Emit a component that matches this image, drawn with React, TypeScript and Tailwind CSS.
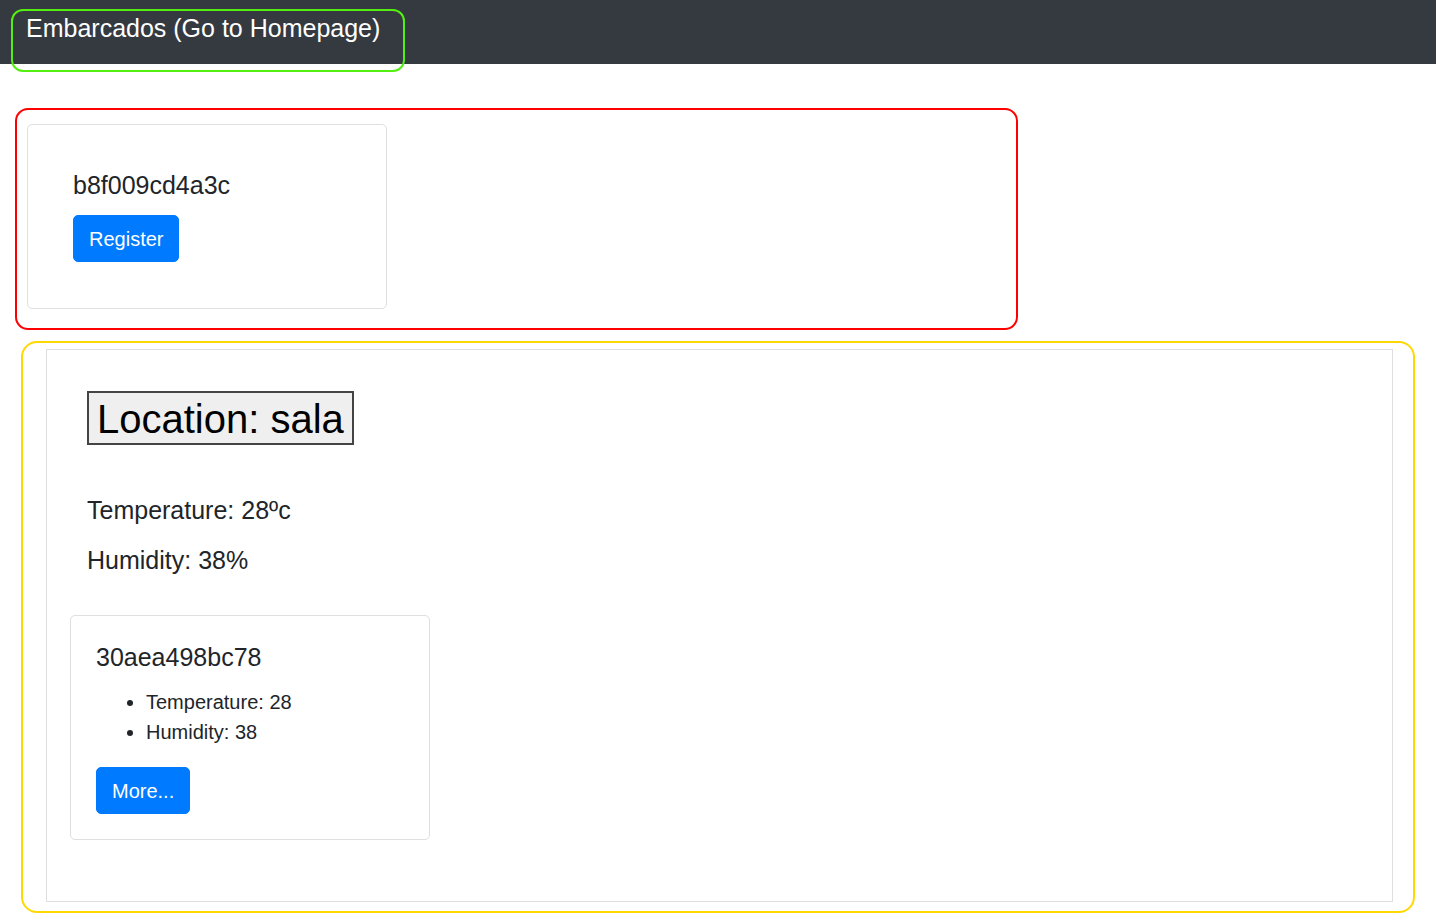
const font = "font-['Liberation_Sans',Arial,sans-serif]";

function Marker({ className }: { className: string }) {
  return <div className={`pointer-events-none absolute border-2 ${className}`} />;
}

export default function App() {
  return (
    <div className={`relative min-h-[923px] bg-white text-[#212529] ${font}`}>
      <nav className="h-[64px] bg-[#343a40] pl-[26px] pt-[13px]">
        <a className="text-[25px] leading-[30px] text-white">Embarcados (Go to Homepage)</a>
      </nav>

      <div className="ml-[27px] mt-[60px] w-[360px] rounded-[5px] border border-[#dfdfdf] px-[45px] pb-[46px] pt-[45px]">
        <h5 className="mb-[15px] text-[25px] leading-[30px]">b8f009cd4a3c</h5>
        <button className="rounded-[5px] border border-[#007bff] bg-[#007bff] px-[15px] py-[7.5px] text-[20px] leading-[30px] text-white">
          Register
        </button>
      </div>

      <div className="ml-[46px] mr-[43px] mt-[40px] border border-[#dfdfdf] px-[40px] pb-[61px] pt-[41px]">
        <button className="border-2 border-[#444] bg-[#efefef] px-[8px] pb-[2px] pt-[4px] text-[40px] leading-[44px] text-black">
          Location: sala
        </button>
        <p className="mt-[50px] text-[25px] leading-[30px]">Temperature: 28ºc</p>
        <p className="mt-[20px] text-[25px] leading-[30px]">Humidity: 38%</p>

        <div className="-ml-[17px] mt-[40px] w-[360px] rounded-[5px] border border-[#dfdfdf] px-[25px] pb-[25px] pt-[26px]">
          <h5 className="mb-[15px] text-[25px] leading-[30px]">30aea498bc78</h5>
          <ul className="mb-[20px] list-disc pl-[50px] text-[20px] leading-[30px]">
            <li>Temperature: 28</li>
            <li>Humidity: 38</li>
          </ul>
          <button className="rounded-[5px] border border-[#007bff] bg-[#007bff] px-[15px] py-[7.5px] text-[20px] leading-[30px] text-white">
            More...
          </button>
        </div>
      </div>

      <Marker className="left-[11px] top-[9px] h-[63px] w-[394px] rounded-[12px] border-[#55ee11]" />
      <Marker className="left-[15px] top-[108px] h-[222px] w-[1003px] rounded-[13px] border-[#ff0000]" />
      <Marker className="left-[21px] top-[341px] h-[572px] w-[1394px] rounded-[16px] border-[#ffd800]" />
    </div>
  );
}
